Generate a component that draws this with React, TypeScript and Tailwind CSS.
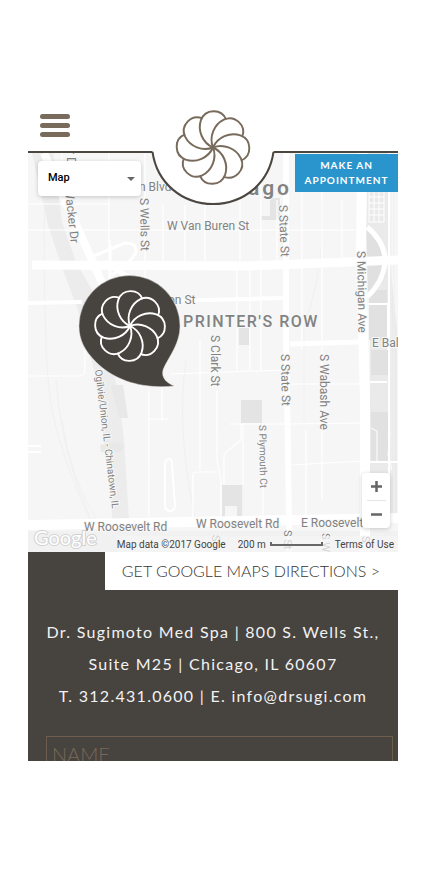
const petals = [0, 45, 90, 135, 180, 225, 270, 315];

function Flower({ className, stroke }: { className: string; stroke: string }) {
  return (
    <svg viewBox="-118 -118 236 236" className={className} fill="none" stroke={stroke} strokeWidth="6" aria-hidden="true">
      {petals.map((a) => (
        <path key={a} transform={`rotate(${a})`} d="M0 0C-32 -14 -48 -52 -37 -84C-24 -119 26 -121 40 -86" />
      ))}
      <circle r="7" fill={stroke} stroke="none" />
    </svg>
  );
}

const thinRoads = [
  "M109 153V250M110 240V330M145 153V340M185 205V262M163 205V262M28 230H355M240 153V262M261 153V262M302 180V350M322 153V500M237 268V370M250 268V370M261 268V370",
  "M28 376H80Q85 376 85 368V345M28 204H110M170 374L285 370M290 384H360M288 424L362 423M292 465L362 461M149 390V517M149 419H168M193 517V474Q193 472 197 472H217M162 345V420M200 340V470M230 424H286",
  "M217 390V460L221 480V520M241 424V440L224 454V485M243 424V517M263 424V517M277 200V262M306 430V515M342 200V262M62 153V180M103 320V370M126 320V376M205 205V262",
];

const rotated = [
  { t: "S Wells St", x: 140, y: 198, a: 89, s: 12 },
  { t: "S State St", x: 279, y: 205, a: 88, s: 12 },
  { t: "S Michigan Ave", x: 357, y: 251, a: 89, s: 12 },
  { t: "S Clark St", x: 211, y: 335, a: 90, s: 12 },
  { t: "S State St", x: 281, y: 354, a: 89, s: 12 },
  { t: "S Wabash Ave", x: 320, y: 354, a: 90, s: 12 },
  { t: "S Plymouth Ct", x: 259, y: 425, a: 89, s: 10 },
  { t: "Wacker Dr", x: 65, y: 189, a: 84, s: 12 },
  { t: "r D", x: 67, y: 150, a: 90, s: 12 },
  { t: "S St", x: 284, y: 530, a: 90, s: 11 },
  { t: "S W", x: 322, y: 533, a: 90, s: 11 },
  { t: "S", x: 362, y: 536, a: 90, s: 11 },
  { t: "S", x: 212, y: 535, a: 90, s: 11 },
];

const flat = [
  { t: "W Van Buren St", x: 167, y: 230 },
  { t: "n Blvd", x: 139, y: 191 },
  { t: "on St", x: 168, y: 304 },
  { t: "E Bal", x: 372, y: 347 },
  { t: "W Roosevelt Rd", x: 84, y: 531 },
  { t: "W Roosevelt Rd", x: 196, y: 528 },
  { t: "E Roosevelt", x: 301, y: 527 },
];

function MapDrawing() {
  return (
    <svg viewBox="28 153 370 399" preserveAspectRatio="xMidYMid slice" className="block h-full w-full font-['Roboto',sans-serif]" role="img" aria-label="Street map of Printer's Row, Chicago">
      <rect x="-200" y="153" width="900" height="399" fill="#f6f6f6" />
      <path d="M32 153H53L62 222L76 262L98 300L107 350L118 390L124 440L131 552H116L104 440L94 370L78 310L63 270L48 225Z" fill="#ececec" />
      <path d="M111 385H123L128 418H119ZM100 445L117 442L125 446L120 452H101Z" fill="#e8e8e8" />
      <path d="M368 153H390V262L397 330V515H370V260L366 230Z" fill="#eaeaea" />
      <path d="M369 290H387V340H369ZM371 350H388V375H371ZM371 412H388V462H371Z" fill="#e1e1e1" />
      <path d="M366 225Q380 240 387 258L386 274Q378 290 368 299Z" fill="#e0e0e0" />
      <path d="M241 400H262V423H241ZM222 485H244V517H222ZM239 328H249V345H239ZM261 216H276V220H261ZM270 198H280V219H270Z" fill="#e4e4e4" />
      <rect x="225" y="506" width="12" height="11" fill="#f6f6f6" />
      <path d="M28 531H398V552H28Z" fill="#f1f1f1" />
      <g fill="none" stroke="#f0f0f0" strokeWidth="1">
        <path d="M45 153Q42 360 52 410T92 525M56 380Q62 460 96 530M62 420Q70 480 100 525M186 360Q176 430 195 517M322 200V240Q318 290 304 325V420M391 153V515M394 153V515" />
      </g>
      <g fill="none" stroke="#ffffff">
        {thinRoads.map((d) => (
          <path key={d} d={d} strokeWidth="1.2" />
        ))}
        <path d="M44 153L60 190L80 233L103 285" strokeWidth="8" />
        <path d="M94 256L125 243Q137 243 136 252Q134 259 112 275M110 245V300" strokeWidth="3" />
        <path d="M104 262L140 284" strokeWidth="5" />
        <path d="M32 265L250 266L398 260" strokeWidth="9" />
        <path d="M28 303L82 302M165 301L285 298" strokeWidth="4" />
        <path d="M290 344L360 342" strokeWidth="5" />
        <path d="M28 525L398 518" strokeWidth="10" />
        <path d="M286 153L286 340L287 390L289 520V552" strokeWidth="6" />
        <path d="M362 153L361 260L365 400V552" strokeWidth="10" />
        <path d="M367 227Q386 243 385 263Q383 282 367 297" strokeWidth="5" />
        <path d="M28 446H41M28 452H41M368 304H388V350M370 382H387M370 462H398M389 153V515" strokeWidth="2" />
        <path d="M165 465Q165 459 169 459Q172 459 172 465L175 505Q175 511 170 511Q165 511 165 505Z" strokeWidth="2" />
        <path d="M369 191H384V222H369ZM374 191V222M379 191V222M369 197H384M369 203H384M369 209H384M369 215H384" strokeWidth="1" />
        <path d="M371 428L377 431V462M390 432L388 455L392 470" strokeWidth="1" />
      </g>
      <g fill="#828282" stroke="#f8f8f8" strokeWidth="2" paintOrder="stroke">
        {flat.map((l) => (
          <text key={l.t + l.x} x={l.x} y={l.y} fontSize="12">{l.t}</text>
        ))}
        {rotated.map((l) => (
          <text key={l.t + l.x} transform={`translate(${l.x} ${l.y}) rotate(${l.a})`} fontSize={l.s}>{l.t}</text>
        ))}
        <text transform="translate(95 370) rotate(83)" fontSize="10">Ogilvie/Union, IL - Chinatown, IL</text>
        <text x="183" y="327" fontSize="16" fontWeight="500" letterSpacing="1.5">PRINTER'S ROW</text>
        <text x="292" y="195" fontSize="21" fontWeight="600" letterSpacing="3" textAnchor="end">Chicago</text>
      </g>
      <path d="M174 386C145 389 116 382 96 362C85 351 79 340 79 326A50.500 50.500 0 0 1 180 326C180 345 167 359 163 370C161 378 167 383 174 386Z" fill="#47433e" stroke="#d8d8d6" strokeWidth="0.500" />
    </svg>
  );
}

export default function App() {
  return (
    <div className="w-full bg-white px-7 py-[90px] font-['Lato',sans-serif]">
      <header className="relative z-10 h-16 pl-3 pt-6">
        <button type="button" aria-label="Open menu" className="flex w-[30px] flex-col gap-1">
          <span className="h-[5px] w-full rounded-full bg-[#786b5c]" />
          <span className="h-[5px] w-full rounded-full bg-[#786b5c]" />
          <span className="h-[5px] w-full rounded-full bg-[#786b5c]" />
        </button>
        <div className="absolute inset-x-0 top-[61px] h-[2px] bg-[#4b4640]" />
        <svg viewBox="0 0 124 56" className="absolute left-1/2 top-[61px] h-14 w-[124px] -translate-x-1/2" aria-hidden="true">
          <path d="M1.500 0V1A61 61 0 0 0 122.500 1V0" fill="#fff" />
          <path d="M1.500 1C6 32 31 53 62 53S118 32 122.500 1" fill="#fff" stroke="#4b4640" strokeWidth="2" />
        </svg>
        <a href="#home" aria-label="Home" className="absolute left-1/2 top-[19px] -translate-x-1/2">
          <Flower className="size-[77px]" stroke="#786b5c" />
        </a>
      </header>

      <main>
        <section className="relative -mt-px h-[399px] overflow-hidden">
          <MapDrawing />
          <div className="absolute left-1/2 top-[136px] -ml-[120px]">
            <Flower className="size-[74px]" stroke="#ffffff" />
          </div>
          <a href="#appointment" className="absolute right-0 top-px w-[103px] bg-[#2a95cd] py-1 text-center text-[10px] font-bold leading-[15px] tracking-[1px] text-white">
            MAKE AN
            <br />
            APPOINTMENT
          </a>
          <div className="absolute left-2.5 top-2 h-[35px] w-[103px]">
            <select aria-label="Map type" className="h-full w-full appearance-none rounded-sm bg-white pl-2.5 font-['Roboto',sans-serif] text-[11px] font-medium text-black shadow-[0_1px_4px_rgba(0,0,0,0.2)]">
              <option>Map</option>
              <option>Satellite</option>
            </select>
            <svg viewBox="0 0 8 4" className="pointer-events-none absolute right-1.5 top-4 h-1 w-2" aria-hidden="true">
              <path d="M0 0H8L4 4Z" fill="#666" />
            </svg>
          </div>
          <div className="absolute bottom-6 right-2 flex w-7 flex-col items-center rounded-sm bg-white shadow-[0_1px_4px_rgba(0,0,0,0.2)]">
            <button type="button" aria-label="Zoom in" className="flex h-[27px] w-full items-center justify-center">
              <svg viewBox="0 0 11 11" className="size-[11px]" aria-hidden="true">
                <path d="M5.500 0V11M0 5.500H11" stroke="#666" strokeWidth="2.500" />
              </svg>
            </button>
            <span className="h-px w-[19px] bg-[#e6e6e6]" />
            <button type="button" aria-label="Zoom out" className="flex h-[27px] w-full items-center justify-center">
              <svg viewBox="0 0 11 11" className="size-[11px]" aria-hidden="true">
                <path d="M0 5.500H11" stroke="#666" strokeWidth="2.500" />
              </svg>
            </button>
          </div>
          <svg viewBox="0 0 70 30" className="absolute bottom-0 left-1 h-[30px] w-[70px]" aria-label="Google">
            <text x="2" y="23" fontSize="20" fontWeight="400" fill="#fff" stroke="#d2d2d2" strokeWidth="2" paintOrder="stroke" className="font-['Lato',sans-serif]">Google</text>
          </svg>
          <div className="absolute bottom-0 right-0 flex h-4 items-center bg-[#f5f5f5]/70 pr-1 font-['Roboto',sans-serif] text-[10px] text-[#444]">
            <span>Map data ©2017 Google</span>
            <span className="ml-3">200 m</span>
            <span className="ml-1 h-1 w-[53px] border-x-2 border-b-2 border-[#666]" />
            <a href="#terms" className="ml-3">Terms of Use</a>
          </div>
        </section>

        <section className="bg-[#47433f]">
          <div className="flex justify-end">
            <a href="#directions" className="bg-white py-[7px] pl-[17px] pr-[18px] text-base font-light leading-6 text-[#38342f]">
              GET GOOGLE MAPS DIRECTIONS &gt;
            </a>
          </div>
          <address className="pt-[26px] text-center text-base not-italic leading-8 tracking-[0.08em] text-[#f2f2f2]">
            Dr. Sugimoto Med Spa | 800 S. Wells St.,
            <br />
            Suite M25 | Chicago, IL 60607
            <br />
            T. 312.431.0600 | E. info@drsugi.com
          </address>
          <form className="mt-6 h-[25px] overflow-hidden pl-[18px] pr-[5px]">
            <input
              type="text"
              aria-label="Name"
              placeholder="NAME"
              className="block h-9 w-full border border-[#6c5d4d] bg-transparent px-[5px] text-xl font-light text-white placeholder:text-[#7a6957]"
            />
          </form>
        </section>
      </main>
    </div>
  );
}
